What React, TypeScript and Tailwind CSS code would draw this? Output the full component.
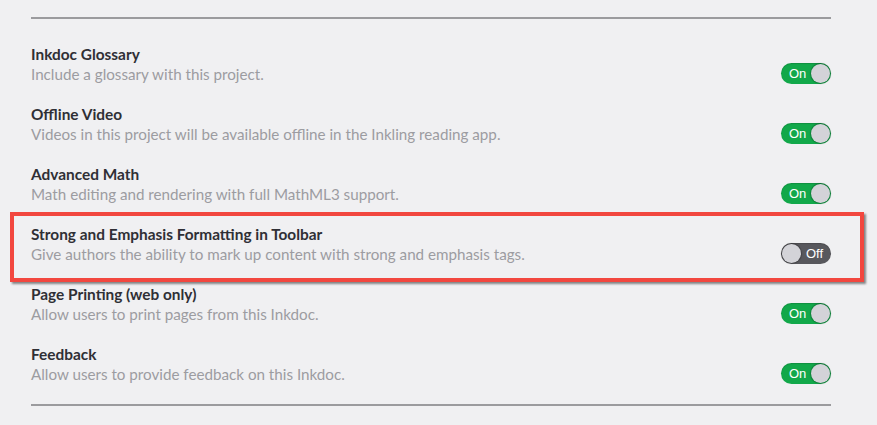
import React from "react";

interface Setting {
  title: string;
  desc: string;
  on: boolean;
  highlight?: boolean;
}

const settings: Setting[] = [
  { title: "Inkdoc Glossary", desc: "Include a glossary with this project.", on: true },
  {
    title: "Offline Video",
    desc: "Videos in this project will be available offline in the Inkling reading app.",
    on: true,
  },
  { title: "Advanced Math", desc: "Math editing and rendering with full MathML3 support.", on: true },
  {
    title: "Strong and Emphasis Formatting in Toolbar",
    desc: "Give authors the ability to mark up content with strong and emphasis tags.",
    on: false,
    highlight: true,
  },
  { title: "Page Printing (web only)", desc: "Allow users to print pages from this Inkdoc.", on: true },
  { title: "Feedback", desc: "Allow users to provide feedback on this Inkdoc.", on: true },
];

function Toggle({ on }: { on: boolean }) {
  return (
    <div
      className={`relative flex h-[21px] w-[50px] items-center rounded-full font-['Liberation_Sans',sans-serif] text-[13px] text-white shadow-[inset_0_1px_1px_rgba(0,0,0,0.15)] ${
        on ? "bg-[#12a84a] justify-start pl-[8px]" : "bg-[#58585d] justify-end pr-[8px]"
      }`}
    >
      <span className="leading-none">{on ? "On" : "Off"}</span>
      <span
        className={`absolute top-[1px] h-[19px] w-[19px] rounded-full bg-[#d3d3d8] shadow-[0_0_1px_1px_rgba(0,0,0,0.25)] ${
          on ? "right-[1px]" : "left-[1px]"
        }`}
      />
    </div>
  );
}

export default function App() {
  return (
    <div className="h-[425px] w-[877px] bg-[#f0f0f2] pt-[17px] font-['Lato','Open_Sans',sans-serif]">
      <div className="ml-[31px] w-[800px]">
        <div className="h-[2px] bg-[#9b9b9e]" />
        <div className="flex flex-col gap-[20px] pb-[20px] pt-[25px]">
          {settings.map((s) => (
            <div key={s.title} className="relative flex items-end justify-between">
              {s.highlight && (
                <div className="pointer-events-none absolute -bottom-[18px] -left-[21px] -right-[33px] -top-[12px] border-[4px] border-[#f2473f] shadow-[2px_2px_2px_rgba(0,0,0,0.45)]" />
              )}
              <div className="flex flex-col">
                <div className="h-[20px] text-[15.4px] font-bold leading-[20px] text-[#2f2f35]">
                  {s.title}
                </div>
                <div className="h-[20px] text-[15.2px] leading-[20px] text-[#9c9ca1]">{s.desc}</div>
              </div>
              <Toggle on={s.on} />
            </div>
          ))}
        </div>
        <div className="h-[2px] bg-[#9b9b9e]" />
      </div>
    </div>
  );
}
